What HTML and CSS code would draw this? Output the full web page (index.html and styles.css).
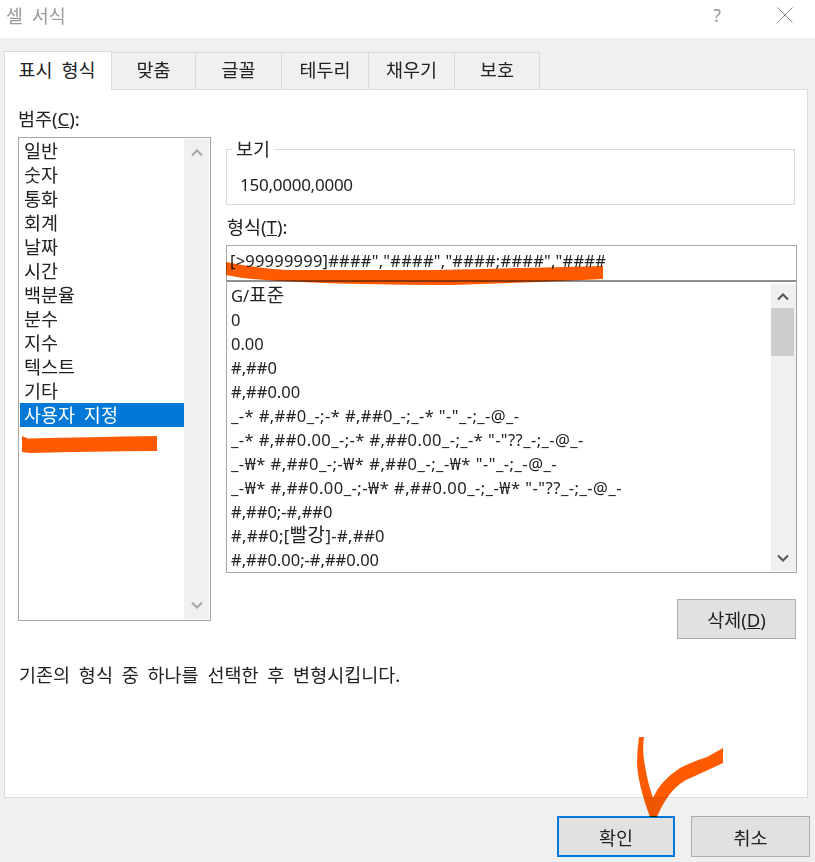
FILE: index.html
```html
<!DOCTYPE html>
<html lang="ko">
<head>
<meta charset="utf-8">
<title>셀 서식</title>
<link rel="stylesheet" href="styles.css">
</head>
<body>
<div class="dialog">
  <header class="titlebar">
    <span class="title">셀 서식</span>
    <div class="title-actions">
      <span class="help">?</span>
      <svg class="close" width="16" height="16" viewBox="0 0 16 16"><path d="M0.5 0.5L15.5 15.5M15.5 0.5L0.5 15.5" stroke="#8a8a8a" fill="none"/></svg>
    </div>
  </header>
  <main class="body">
    <nav class="tabs">
      <span class="tab tab-active">표시 형식</span>
      <span class="tab w84">맞춤</span>
      <span class="tab w86">글꼴</span>
      <span class="tab w87">테두리</span>
      <span class="tab w86">채우기</span>
      <span class="tab w85">보호</span>
    </nav>
    <section class="panel">
      <div class="columns">
        <div class="col-left">
          <label class="label label-cat">범주(<u>C</u>):</label>
          <div class="listbox cat-box">
            <ul class="cat-list">
              <li>일반</li><li>숫자</li><li>통화</li><li>회계</li><li>날짜</li><li>시간</li>
              <li>백분율</li><li>분수</li><li>지수</li><li>텍스트</li><li>기타</li>
              <li class="selected">사용자 지정</li>
            </ul>
            <div class="scrollbar">
              <svg class="arrow" width="14" height="10" viewBox="0 0 14 10"><path d="M2 7.5L7 2.5L12 7.5" stroke="#a6a6a6" stroke-width="2" fill="none"/></svg>
              <svg class="arrow" width="14" height="10" viewBox="0 0 14 10"><path d="M2 2.5L7 7.5L12 2.5" stroke="#a6a6a6" stroke-width="2" fill="none"/></svg>
            </div>
          </div>
        </div>
        <div class="col-right">
          <fieldset class="preview">
            <legend>보기</legend>
            <div class="preview-value">150,0000,0000</div>
          </fieldset>
          <label class="label label-fmt">형식(<u>T</u>):</label>
          <div class="format-input">[&gt;99999999]####","####","####;####","####</div>
          <div class="listbox fmt-box">
            <ul class="fmt-list">
              <li>G/<span class="ko">표준</span></li>
              <li>0</li>
              <li>0.00</li>
              <li>#,##0</li>
              <li>#,##0.00</li>
              <li class="wide">_-* #,##0_-;-* #,##0_-;_-* "-"_-;_-@_-</li>
              <li class="wide">_-* #,##0.00_-;-* #,##0.00_-;_-* "-"??_-;_-@_-</li>
              <li class="wider">_-₩* #,##0_-;-₩* #,##0_-;_-₩* "-"_-;_-@_-</li>
              <li class="wider">_-₩* #,##0.00_-;-₩* #,##0.00_-;_-₩* "-"??_-;_-@_-</li>
              <li>#,##0;-#,##0</li>
              <li class="wide">#,##0;[<span class="ko">빨강</span>]-#,##0</li>
              <li>#,##0.00;-#,##0.00</li>
            </ul>
            <div class="scrollbar scrollbar-fmt">
              <svg class="arrow" width="14" height="10" viewBox="0 0 14 10"><path d="M2 7.5L7 2.5L12 7.5" stroke="#555" stroke-width="2" fill="none"/></svg>
              <div class="thumb"></div>
              <svg class="arrow arrow-end" width="14" height="10" viewBox="0 0 14 10"><path d="M2 2.5L7 7.5L12 2.5" stroke="#555" stroke-width="2" fill="none"/></svg>
            </div>
          </div>
          <button class="btn btn-delete">삭제(<u>D</u>)</button>
        </div>
      </div>
      <p class="description">기존의 형식 중 하나를 선택한 후 변형시킵니다.</p>
    </section>
    <footer class="footer">
      <button class="btn btn-ok">확인</button>
      <button class="btn btn-cancel">취소</button>
    </footer>
  </main>
  <svg class="marks" width="815" height="862" viewBox="0 0 815 862">
    <path fill="#ff5a00" d="M22 436L28 438.500Q90 437 157 436V451Q90 451.500 30 453L22 452Z"/>
    <path fill="#ff5a00" d="M226 262Q255 268 287 270L433 270Q520 268 603 266V279Q520 283 453 285Q320 285 253 279Q240 278 226 275Z"/>
    <path fill="#ff5a00" d="M639 737L644 737Q642 752 645 766Q648 784 653 798Q660 781 680 768Q694 761 707 757Q716 752 723 748V763Q704 772 686 780Q668 790 657 817L650 817Q638 785 637 763Q637 750 639 737Z"/>
  </svg>
</div>
</body>
</html>
```
FILE: styles.css
```css
* { box-sizing: border-box; }
html, body { margin: 0; padding: 0; }
body {
  width: 815px;
  height: 862px;
  overflow: hidden;
  background: #fff;
  color: #222;
  font-family: "Noto Sans", "Noto Sans CJK KR", sans-serif;
  font-size: 17px;
}
.dialog { position: relative; width: 815px; height: 862px; }
.titlebar {
  height: 38px;
  display: flex;
  align-items: center;
  justify-content: space-between;
  padding: 0 22px 8px 6px;
}
.title { color: #9a9a9a; font-size: 18.500px; word-spacing: 4px; }
.title-actions { display: flex; align-items: center; gap: 56px; }
.help { color: #9a9a9a; font-size: 18px; line-height: 16px; }
.close { display: block; }
.body {
  height: 824px;
  background: #f0f0f0;
  padding: 14px 7px 0 4px;
}
.tabs { display: flex; height: 37px; position: relative; }
.tab {
  display: flex;
  align-items: center;
  justify-content: center;
  height: 37px;
  background: #f0f0f0;
  border: 1px solid #dadada;
  border-left: 0;
  border-bottom: 0;
  font-size: 18.500px;
  word-spacing: 4px;
  padding-bottom: 4px;
}
.tab-active {
  width: 108px;
  height: 39px;
  margin-top: -1px;
  background: #fff;
  border-left: 1px solid #dadada;
  position: relative;
  z-index: 1;
  padding-right: 2px;
}
.w84 { width: 84px; }
.w85 { width: 85px; }
.w86 { width: 86px; }
.w87 { width: 87px; }
.panel {
  height: 709px;
  background: #fff;
  border: 1px solid #dadada;
  padding: 20px 10px 0 13px;
}
.columns {
  display: grid;
  grid-template-columns: 193px 571px;
  column-gap: 15px;
}
.label { display: block; font-size: 18.500px; line-height: 18px; }
.label-cat { margin-bottom: 9px; }
.listbox { display: flex; background: #fff; border: 1px solid #a6a6a6; }
.cat-box { height: 484px; padding: 1px; }
ul { list-style: none; margin: 0; padding: 0; }
.cat-list { flex: 1; }
.cat-list li {
  height: 24px;
  line-height: 24px;
  padding-left: 4px;
  font-size: 18.500px;
  word-spacing: 4px;
}
.cat-list .selected { background: #0078d7; color: #fff; }
.scrollbar {
  width: 25px;
  background: #f0f0f0;
  display: flex;
  flex-direction: column;
  align-items: center;
  justify-content: space-between;
  padding: 9px 0;
}
.preview {
  margin: 28px 2px 0 0;
  padding: 0 0 0 13px;
  height: 67px;
  border: 1px solid #dadada;
  min-width: 0;
}
.preview legend {
  margin-left: -8px;
  padding: 0 4px;
  font-size: 18.500px;
  line-height: 22px;
}
.preview-value { margin-top: 13px; line-height: 24px; letter-spacing: -0.25px; }
.label-fmt { margin-top: 13px; margin-bottom: 9px; padding-left: 1px; }
.format-input {
  height: 35px;
  border: 1px solid #a6a6a6;
  border-bottom: 0;
  padding: 3px 0 0 3px;
  line-height: 24px;
  font-size: 16.500px;
  white-space: nowrap;
  letter-spacing: 0.22px;
}
.fmt-box { height: 293px; padding: 2px 0 1px; border-top: 2px solid #8f8f8f; }
.fmt-list { flex: 1; padding-left: 4px; }
.fmt-list li {
  height: 24px;
  line-height: 24px;
  font-size: 16.500px;
  white-space: nowrap;
}
.fmt-list .wide { letter-spacing: 0.42px; }
.fmt-list .wider { letter-spacing: 0.5px; }
.ko { font-size: 19px; line-height: 20px; }
.scrollbar-fmt { justify-content: flex-start; padding: 8px 2px 8px 0; }
.thumb { width: 23px; height: 48px; margin-top: 6px; background: #cdcdcd; }
.arrow { display: block; flex: none; }
.arrow-end { margin-top: auto; }
.btn {
  display: flex;
  align-items: center;
  justify-content: center;
  background: #e1e1e1;
  border: 1px solid #adadad;
  color: #222;
  font-family: inherit;
  font-size: 18.500px;
  padding: 0;
}
.btn-delete { width: 119px; height: 40px; margin: 26px 1px 0 auto; }
.description { margin: 27px 0 0 1px; font-size: 18.500px; line-height: 18px; word-spacing: 4px; }
.footer {
  display: flex;
  justify-content: flex-end;
  gap: 16px;
  padding: 18px 0 0;
  margin-right: -2px;
}
.btn-ok { width: 118px; height: 41px; border: 2px solid #0078d7; }
.btn-cancel { width: 119px; height: 41px; }
.marks {
  position: absolute;
  left: 0;
  top: 0;
  mix-blend-mode: multiply;
  pointer-events: none;
}
```
